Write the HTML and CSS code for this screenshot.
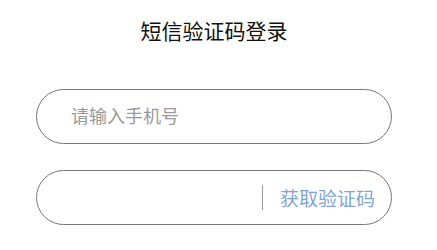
FILE: index.html
```html
<!DOCTYPE html>
<html lang="zh-CN">
<head>
  <meta charset="UTF-8">
  <meta name="viewport" content="width=device-width, initial-scale=1">
  <title>短信验证码登录</title>
  <link rel="stylesheet" href="styles.css">
</head>
<body>
  <div class="login">
    <h1 class="title">短信验证码登录</h1>
    <div class="field">
      <input class="field-input" type="tel" placeholder="请输入手机号">
    </div>
    <div class="field">
      <input class="field-input" type="text">
      <span class="divider"></span>
      <a class="get-code" href="#">获取验证码</a>
    </div>
  </div>
</body>
</html>
```

FILE: styles.css
```css
body {
  margin: 0;
  padding: 0;
  background: #fff;
  font-family: "Noto Sans CJK SC", "Noto Sans", sans-serif;
}
.login {
  width: 356px;
  margin-left: 36px;
  padding-top: 15px;
}
.title {
  margin: 0;
  text-align: center;
  font-size: 21px;
  font-weight: normal;
  color: #111;
  line-height: 30px;
  height: 74px;
}
.field {
  display: flex;
  align-items: center;
  height: 55px;
  box-sizing: border-box;
  border: 1px solid #777;
  border-radius: 28px;
  padding: 0 16px 0 34px;
  margin-bottom: 26px;
}
.field-input {
  flex: 1;
  min-width: 0;
  border: none;
  outline: none;
  background: transparent;
  font-family: inherit;
  font-size: 18px;
  color: #333;
  padding: 0 0 3px;
}
.field-input::placeholder {
  color: #999;
}
.divider {
  width: 1px;
  height: 25px;
  background: #999;
  margin-right: 17px;
}
.get-code {
  font-size: 19px;
  color: #7fa5d8;
  text-decoration: none;
}
```
